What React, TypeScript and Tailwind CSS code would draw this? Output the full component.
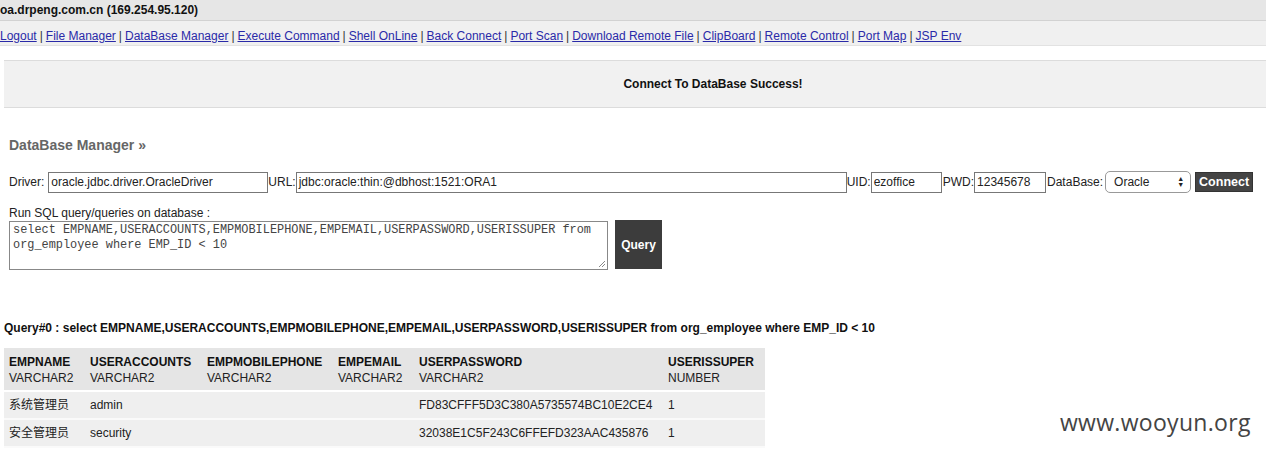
import React from 'react';

const navLinks = [
  'Logout',
  'File Manager',
  'DataBase Manager',
  'Execute Command',
  'Shell OnLine',
  'Back Connect',
  'Port Scan',
  'Download Remote File',
  'ClipBoard',
  'Remote Control',
  'Port Map',
  'JSP Env',
];

const columns = [
  { name: 'EMPNAME', type: 'VARCHAR2', w: 'w-[81px]' },
  { name: 'USERACCOUNTS', type: 'VARCHAR2', w: 'w-[117px]' },
  { name: 'EMPMOBILEPHONE', type: 'VARCHAR2', w: 'w-[131px]' },
  { name: 'EMPEMAIL', type: 'VARCHAR2', w: 'w-[81px]' },
  { name: 'USERPASSWORD', type: 'VARCHAR2', w: 'w-[249px]' },
  { name: 'USERISSUPER', type: 'NUMBER', w: 'w-[102px]' },
];

const rows = [
  ['系统管理员', 'admin', '', '', 'FD83CFFF5D3C380A5735574BC10E2CE4', '1'],
  ['安全管理员', 'security', '', '', '32038E1C5F243C6FFEFD323AAC435876', '1'],
];

const sql = 'select EMPNAME,USERACCOUNTS,EMPMOBILEPHONE,EMPEMAIL,USERPASSWORD,USERISSUPER from org_employee where EMP_ID < 10';

export default function App() {
  return (
    <div className="relative w-[1266px] h-[449px] overflow-hidden bg-white text-[12px] text-[#222] font-['Liberation_Sans','Noto_Sans_CJK_SC',sans-serif]">
      {/* host header */}
      <div className="h-[21px] bg-[#e6e6e6] border-b border-[#d2d2d2] flex items-center font-bold text-[12px] text-[#111]">
        oa.drpeng.com.cn (169.254.95.120)
      </div>
      {/* nav */}
      <div className="h-[25px] bg-[#f0f0f0] border-b border-[#e2e2e2] flex items-center pt-[5px]">
        {navLinks.map((l, i) => (
          <React.Fragment key={l}>
            {i > 0 && <span className="text-[#333] mx-[3px]">|</span>}
            <a href="#" className="text-[#2a2aa8] underline">{l}</a>
          </React.Fragment>
        ))}
      </div>

      {/* status box */}
      <div className="ml-[4px] mt-[14px] h-[48px] bg-[#f1f1f1] border-y border-[#dcdcdc] flex items-center justify-center pl-[156px] font-bold text-[12px] text-[#111]">
        Connect To DataBase Success!
      </div>

      {/* db manager */}
      <div className="px-[9px] pt-[28px]">
        <div className="font-bold text-[14px] text-[#666] leading-[18px]">DataBase Manager »</div>

        <div className="mt-[17px] flex items-center h-[22px] text-[12px] text-[#222]">
          <span className="mr-[4px]">Driver:</span>
          <div className="w-[220px] h-[21px] border border-[#777] px-[2px] flex items-center">oracle.jdbc.driver.OracleDriver</div>
          <span>URL:</span>
          <div className="w-[551px] h-[21px] border border-[#777] px-[2px] flex items-center">jdbc:oracle:thin:@dbhost:1521:ORA1</div>
          <span>UID:</span>
          <div className="w-[71px] h-[21px] border border-[#777] px-[2px] flex items-center">ezoffice</div>
          <span className="ml-[1px]">PWD:</span>
          <div className="w-[72px] h-[21px] border border-[#777] px-[2px] flex items-center">12345678</div>
          <span className="ml-[1px] mr-[2px]">DataBase:</span>
          <div className="w-[86px] h-[22px] border border-[#999] rounded-[5px] pl-[8px] pr-[6px] flex items-center justify-between bg-white">
            <span>Oracle</span>
            <span className="flex flex-col text-[7px] leading-[6px] text-[#222]">
              <span>▲</span>
              <span>▼</span>
            </span>
          </div>
          <div className="ml-[4px] w-[58px] h-[20px] bg-[#444] text-white font-bold text-[12.5px] flex items-center justify-center border border-[#333]">
            Connect
          </div>
        </div>

        <div className="mt-[13px] leading-[14px]">Run SQL query/queries on database :</div>
        <div className="mt-[1px] flex items-start gap-[7px]">
          <div className="relative w-[599px] h-[49px] border border-[#888] px-[3px] pt-[1px] font-['Liberation_Mono',monospace] text-[11.9px] leading-[15px] text-[#444] whitespace-pre-wrap">
            {'select EMPNAME,USERACCOUNTS,EMPMOBILEPHONE,EMPEMAIL,USERPASSWORD,USERISSUPER from\norg_employee where EMP_ID < 10'}
            <svg className="absolute right-[2px] bottom-[2px]" width="7" height="7" viewBox="0 0 7 7">
              <path d="M7 1 L1 7 M7 4 L4 7" stroke="#888" strokeWidth="1" />
            </svg>
          </div>
          <div className="w-[47px] h-[49px] mt-[-1px] bg-[#3c3c3c] text-white font-bold text-[12px] flex items-center justify-center">
            Query
          </div>
        </div>
      </div>

      {/* results */}
      <div className="pl-[4px] pt-[51px]">
        <div className="font-bold text-[12px] text-[#111] leading-[14px]">Query#0 : {sql}</div>
        <div className="mt-[13px] w-[761px] text-[12px] text-[#222]">
          <div className="flex h-[44px] bg-[#e5e5e5] border-b-2 border-white">
            {columns.map((c) => (
              <div key={c.name} className={`${c.w} pl-[5px] pt-[6px] leading-[16px]`}>
                <div className="font-bold text-[#111]">{c.name}</div>
                <div>{c.type}</div>
              </div>
            ))}
          </div>
          {rows.map((r, ri) => (
            <div key={ri} className="flex h-[28px] bg-[#efefef] border-b-2 border-[#fafafa] items-center">
              {r.map((v, ci) => (
                <div key={ci} className={`${columns[ci].w} pl-[5px]`}>{v}</div>
              ))}
            </div>
          ))}
        </div>
      </div>

      {/* watermark */}
      <div className="absolute left-[1060px] top-[405px] text-[23px] text-[#444] font-['Open_Sans',sans-serif] tracking-[0.3px]">
        www.wooyun.org
      </div>
    </div>
  );
}
